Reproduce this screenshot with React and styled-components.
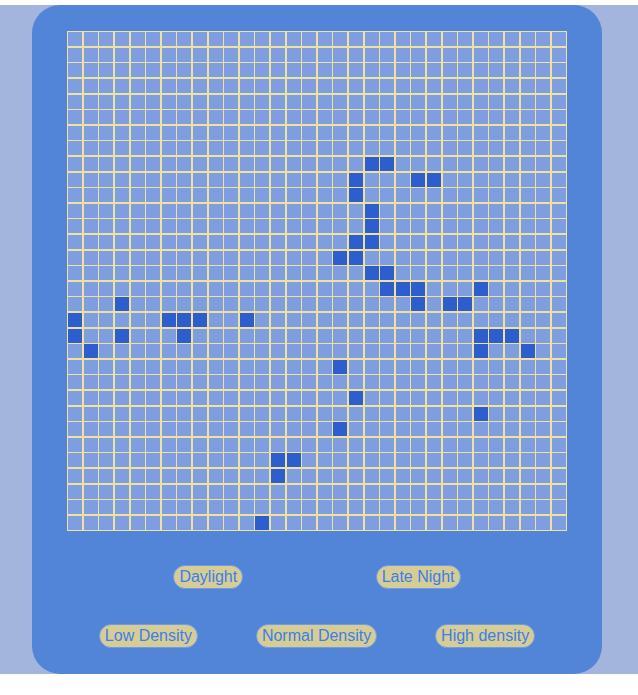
import React from "react";
import styled, { createGlobalStyle } from "styled-components";

const GlobalStyle = createGlobalStyle`
  html, body { margin: 0; padding: 0; background: #ffffff; }
  body { font-family: "Liberation Sans", Arial, sans-serif; }
`;

const Page = styled.div`
  margin-top: 5px;
  background: #a4b5dd;
  display: flex;
  padding-left: 32px;
`;

const Panel = styled.div`
  width: 570px;
  box-sizing: border-box;
  background: #5285d8;
  border-radius: 28px;
  padding: 26px 9px;
  display: flex;
  flex-direction: column;
  align-items: center;
`;

const Board = styled.div`
  width: 500px;
  height: 500px;
  box-sizing: border-box;
  background: #efe2a0;
  padding: 1.2px;
  display: grid;
  grid-template-columns: repeat(32, 1fr);
  grid-template-rows: repeat(32, 1fr);
  gap: 1.5px;
`;

const Cell = styled.div`
  background: ${(p) => (p.$alive ? "#2e5dcd" : "#7f9ee0")};
`;

const Controls = styled.div`
  width: 100%;
  margin-top: 34px;
  display: flex;
  flex-direction: column;
  gap: 35px;
`;

const Row = styled.div`
  display: flex;
  justify-content: space-evenly;
  align-items: center;
`;

const Pill = styled.button`
  height: 24px;
  box-sizing: border-box;
  padding: 0 5px;
  border: 1px solid #6f9ae6;
  border-radius: 12px;
  background: #d6cd96;
  color: #3d7ee8;
  font-family: "Liberation Sans", Arial, sans-serif;
  font-size: 16px;
  line-height: 22px;
  cursor: pointer;
`;

const alive = {
  8: [19, 20],
  9: [18, 22, 23],
  10: [18],
  11: [19],
  12: [19],
  13: [18, 19],
  14: [17, 18],
  15: [19, 20],
  16: [20, 21, 22, 26],
  17: [3, 22, 24, 25],
  18: [0, 6, 7, 8, 11],
  19: [0, 3, 7, 26, 27, 28],
  20: [1, 26, 29],
  21: [17],
  23: [18],
  24: [26],
  25: [17],
  27: [13, 14],
  28: [13],
  31: [12],
};

export default function App() {
  const cells = [];
  for (let r = 0; r < 32; r++) {
    for (let c = 0; c < 32; c++) {
      const on = (alive[r] || []).includes(c);
      cells.push(<Cell key={`${r}-${c}`} $alive={on} />);
    }
  }
  return (
    <>
      <GlobalStyle />
      <Page>
        <Panel>
          <Board>{cells}</Board>
          <Controls>
            <Row>
              <Pill>Daylight</Pill>
              <Pill>Late Night</Pill>
            </Row>
            <Row>
              <Pill>Low Density</Pill>
              <Pill>Normal Density</Pill>
              <Pill>High density</Pill>
            </Row>
          </Controls>
        </Panel>
      </Page>
    </>
  );
}
